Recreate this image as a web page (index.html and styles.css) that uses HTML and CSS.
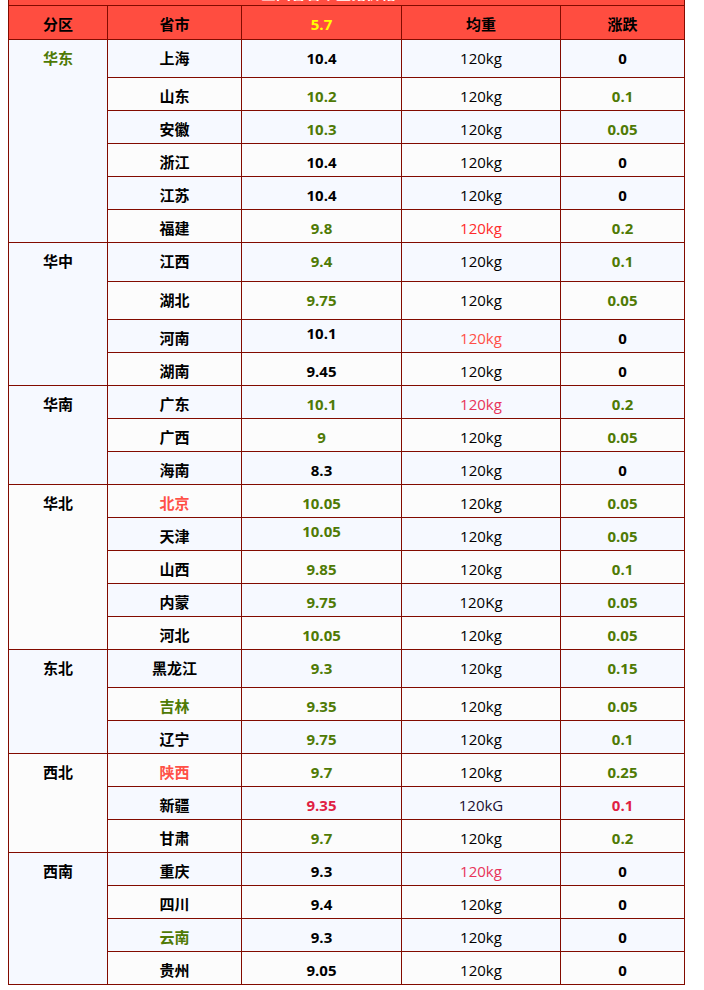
FILE: index.html
```html
<!DOCTYPE html>
<html lang="zh-CN">
<head>
<meta charset="utf-8">
<title>生猪价格表</title>
<link rel="stylesheet" href="styles.css">
</head>
<body>
<table class="price">
  <colgroup>
    <col class="c1"><col class="c2"><col class="c3"><col class="c4"><col class="c5">
  </colgroup>
  <tr class="title"><td colspan="5">全国各省市生猪价格</td></tr>
  <tr class="head"><th>分区</th><th>省市</th><th class="yel">5.7</th><th>均重</th><th>涨跌</th></tr>

  <tr class="odd t38"><td rowspan="6" class="region g">华东</td><td>上海</td><td class="n">10.4</td><td class="w">120kg</td><td class="n">0</td></tr>
  <tr class="even"><td>山东</td><td class="n g">10.2</td><td class="w">120kg</td><td class="n g">0.1</td></tr>
  <tr class="odd"><td>安徽</td><td class="n g">10.3</td><td class="w">120kg</td><td class="n g">0.05</td></tr>
  <tr class="even"><td>浙江</td><td class="n">10.4</td><td class="w">120kg</td><td class="n">0</td></tr>
  <tr class="odd"><td>江苏</td><td class="n">10.4</td><td class="w">120kg</td><td class="n">0</td></tr>
  <tr class="even"><td>福建</td><td class="n g">9.8</td><td class="w red">120kg</td><td class="n g">0.2</td></tr>

  <tr class="odd t39"><td rowspan="4" class="region">华中</td><td>江西</td><td class="n g">9.4</td><td class="w">120kg</td><td class="n g">0.1</td></tr>
  <tr class="even t38"><td>湖北</td><td class="n g">9.75</td><td class="w">120kg</td><td class="n g">0.05</td></tr>
  <tr class="odd"><td>河南</td><td class="n hi">10.1</td><td class="w salmon">120kg</td><td class="n">0</td></tr>
  <tr class="even"><td>湖南</td><td class="n">9.45</td><td class="w">120kg</td><td class="n">0</td></tr>

  <tr class="odd"><td rowspan="3" class="region">华南</td><td>广东</td><td class="n g">10.1</td><td class="w pink">120kg</td><td class="n g">0.2</td></tr>
  <tr class="even"><td>广西</td><td class="n g">9</td><td class="w">120kg</td><td class="n g">0.05</td></tr>
  <tr class="odd"><td>海南</td><td class="n">8.3</td><td class="w">120kg</td><td class="n">0</td></tr>

  <tr class="even"><td rowspan="5" class="region">华北</td><td class="salmon">北京</td><td class="n g">10.05</td><td class="w">120kg</td><td class="n g">0.05</td></tr>
  <tr class="odd"><td>天津</td><td class="n g hi">10.05</td><td class="w">120kg</td><td class="n g">0.05</td></tr>
  <tr class="even"><td>山西</td><td class="n g">9.85</td><td class="w">120kg</td><td class="n g">0.1</td></tr>
  <tr class="odd"><td>内蒙</td><td class="n g">9.75</td><td class="w">120Kg</td><td class="n g">0.05</td></tr>
  <tr class="even"><td>河北</td><td class="n g">10.05</td><td class="w">120kg</td><td class="n g">0.05</td></tr>

  <tr class="odd t38"><td rowspan="3" class="region">东北</td><td>黑龙江</td><td class="n g">9.3</td><td class="w">120kg</td><td class="n g">0.15</td></tr>
  <tr class="even"><td class="g">吉林</td><td class="n g">9.35</td><td class="w">120kg</td><td class="n g">0.05</td></tr>
  <tr class="odd"><td>辽宁</td><td class="n g">9.75</td><td class="w">120kg</td><td class="n g">0.1</td></tr>

  <tr class="even"><td rowspan="3" class="region">西北</td><td class="salmon">陕西</td><td class="n g">9.7</td><td class="w">120kg</td><td class="n g">0.25</td></tr>
  <tr class="odd"><td>新疆</td><td class="n crimson">9.35</td><td class="w dark">120kG</td><td class="n crimson">0.1</td></tr>
  <tr class="even"><td>甘肃</td><td class="n g">9.7</td><td class="w">120kg</td><td class="n g">0.2</td></tr>

  <tr class="odd"><td rowspan="4" class="region">西南</td><td>重庆</td><td class="n">9.3</td><td class="w pink">120kg</td><td class="n">0</td></tr>
  <tr class="even"><td>四川</td><td class="n">9.4</td><td class="w">120kg</td><td class="n">0</td></tr>
  <tr class="odd"><td class="g">云南</td><td class="n">9.3</td><td class="w">120kg</td><td class="n">0</td></tr>
  <tr class="even"><td>贵州</td><td class="n">9.05</td><td class="w">120kg</td><td class="n">0</td></tr>
</table>
</body>
</html>
```

FILE: styles.css
```css
html, body {
  background: #ffffff;
}
body {
  margin: 0 0 0 8px;
  font-family: "Open Sans", "Noto Sans CJK SC", sans-serif;
  font-size: 15px;
  color: #000;
}
.price {
  border-collapse: collapse;
  table-layout: fixed;
  width: 676px;
  margin-top: -28px;
}
.c1 { width: 99px; }
.c2 { width: 134px; }
.c3 { width: 160px; }
.c4 { width: 159px; }
.c5 { width: 124px; }

.price td, .price th {
  border: 1px solid #820b00;
  padding: 8px 4px 0;
  line-height: 20px;
  text-align: center;
  vertical-align: top;
  font-weight: 700;
  overflow: hidden;
  white-space: nowrap;
}
.price tr { height: 33px; }
.price tr.t38 { height: 38px; }
.price tr.t39 { height: 39px; }

.title td {
  background: #ff4d40;
  color: #fff;
  height: 30px;
  vertical-align: bottom;
  padding: 0 36px 2px 0;
}
.price .head { height: 34px; }
.head th {
  background: #ff4d40;
  color: #000;
}
.head th.yel { color: #ffff00; }

.odd td { background: #f6f9ff; }
.even td { background: #fcfcfc; }

.price td.w { font-weight: 400; }
.price td.hi { padding-top: 3px; }

.g { color: #4f7a05; }
.red { color: #ff2b2b; }
.salmon { color: #ff5047; }
.pink { color: #e8345a; }
.crimson { color: #e01f44; }
.dark { color: #1c0f33; }
```
